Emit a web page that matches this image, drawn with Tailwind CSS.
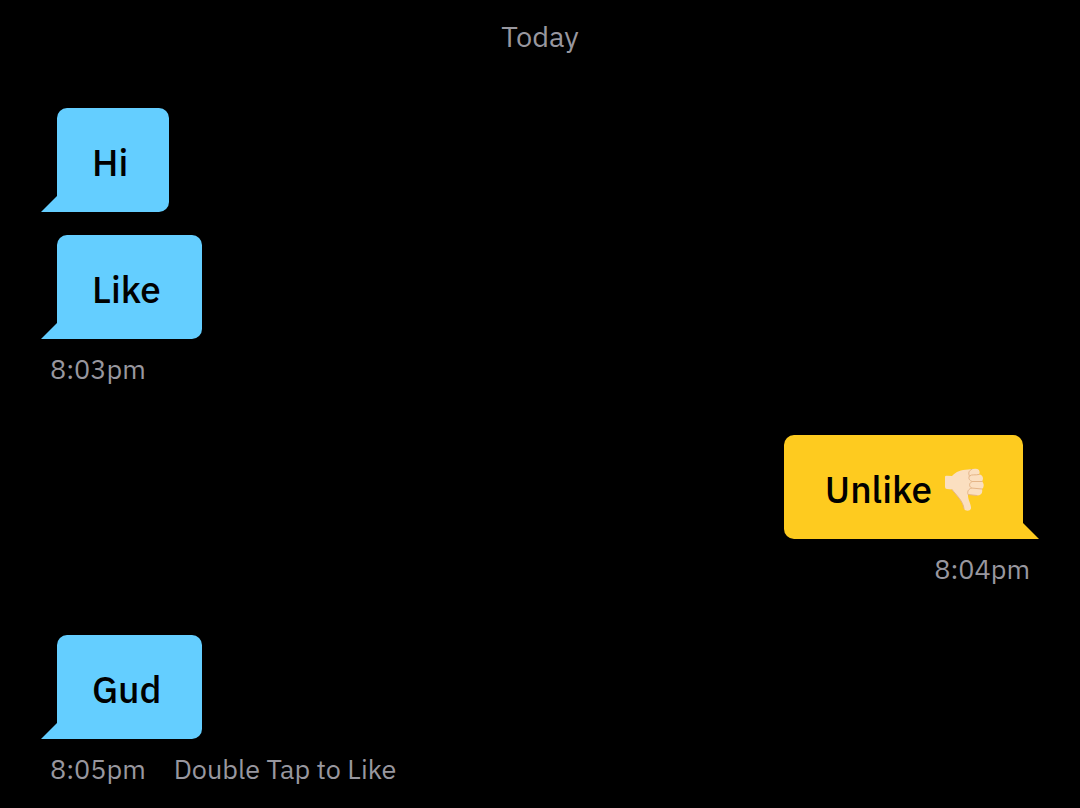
<!DOCTYPE html>
<html lang="en">
<head>
<meta charset="utf-8">
<meta name="viewport" content="width=device-width, initial-scale=1">
<title>Chat</title>
<script src="https://cdn.jsdelivr.net/npm/@tailwindcss/browser@4"></script>
</head>
<body class="min-h-screen bg-black font-['IBM_Plex_Sans',Roboto,sans-serif] text-[27px] leading-9 text-[#98979f]">
<main class="flex flex-col px-[41px] pt-[18px]">
  <h1 class="text-center text-[29px] leading-9">Today</h1>

  <section class="mt-[54px] flex flex-col items-start">
    <div class="flex items-end">
      <svg class="size-4 text-[#64ceff]" viewBox="0 0 16 16" aria-hidden="true"><path d="M16 0V16H0Z" fill="currentColor"/></svg>
      <p class="rounded-[10px] rounded-bl-none bg-[#64ceff] pt-[34px] pr-[41px] pb-[30px] pl-[35px] text-[37px] leading-10 font-medium text-black">Hi</p>
    </div>
    <div class="mt-[23px] flex items-end">
      <svg class="size-4 text-[#64ceff]" viewBox="0 0 16 16" aria-hidden="true"><path d="M16 0V16H0Z" fill="currentColor"/></svg>
      <p class="rounded-[10px] rounded-bl-none bg-[#64ceff] pt-[34px] pr-[41px] pb-[30px] pl-[35px] text-[37px] leading-10 font-medium text-black">Like</p>
    </div>
    <time class="mt-3 ml-[9px]">8:03pm</time>
  </section>

  <section class="mt-12 flex flex-col items-end">
    <div class="flex items-end">
      <p class="flex items-center gap-3 rounded-[10px] rounded-br-none bg-[#fecb1f] pt-[34px] pr-[39px] pb-[30px] pl-[41px] text-[37px] leading-10 font-medium text-black">Unlike
        <svg class="-my-1 h-11 w-10" viewBox="0 0 40 44" role="img" aria-label="Thumbs down">
          <path d="M1 10Q1 8.500 3 8.800L8 9C12 4.500 17 3 24 2.500L31 1.800C35.500 1.500 36.500 5 35 7.500C39 7.500 40 12 38 14.500C40.500 16.500 40 20.500 38 22C39 26 37 28.500 33 28.500L24 27.500C23.500 32 27.500 38 27 41.500C26 44.500 21 44.500 20 41.500C19 34 13 29 8 22.500L3 22Q1 22 1 20Z" fill="#fbdfc0"/>
          <path d="M35 7.500C31 8.500 28 7 25.500 9C24 11 25.500 14 28.500 14.500L38 14.500M28.500 14.500C25 15.500 24.500 19 27.500 21L38 22M27.500 21C24.500 22 23 24.500 24 27.500L33 28.500M28 2.200C24.500 3.500 24 6.500 25.500 9M8 22.500C13 29 19 34 20 41.500" fill="none" stroke="#e5b587" stroke-width="1" stroke-linecap="round"/>
        </svg>
      </p>
      <svg class="size-4 text-[#fecb1f]" viewBox="0 0 16 16" aria-hidden="true"><path d="M0 0V16H16Z" fill="currentColor"/></svg>
    </div>
    <time class="mt-3 mr-[9px]">8:04pm</time>
  </section>

  <section class="mt-12 flex flex-col items-start">
    <div class="flex items-end">
      <svg class="size-4 text-[#64ceff]" viewBox="0 0 16 16" aria-hidden="true"><path d="M16 0V16H0Z" fill="currentColor"/></svg>
      <p class="rounded-[10px] rounded-bl-none bg-[#64ceff] pt-[34px] pr-[41px] pb-[30px] pl-[35px] text-[37px] leading-10 font-medium text-black">Gud</p>
    </div>
    <div class="mt-3 ml-[9px] flex gap-7">
      <time>8:05pm</time>
      <span>Double Tap to Like</span>
    </div>
  </section>
</main>
</body>
</html>
